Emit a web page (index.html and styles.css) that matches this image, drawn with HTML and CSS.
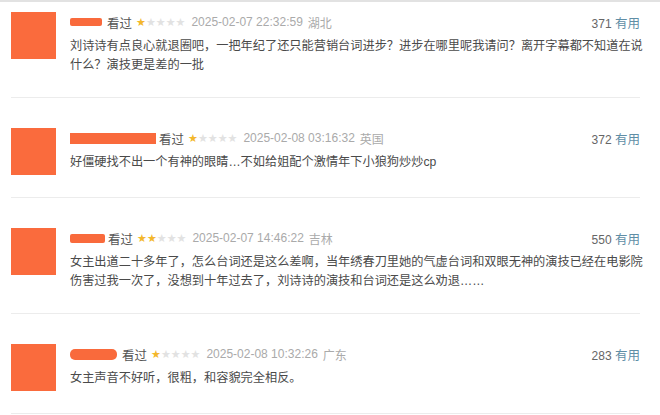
FILE: index.html
```html
<!DOCTYPE html>
<html lang="zh-CN">
<head>
  <meta charset="UTF-8">
  <meta name="viewport" content="width=device-width, initial-scale=1.0">
  <title>短评</title>
  <link rel="stylesheet" href="styles.css">
</head>
<body>
  <div class="comments">
    <!-- 第一条 -->
    <div class="comment">
      <div class="avatar"></div>
      <div class="body">
        <div class="meta">
          <span class="name name-1"></span>
          <span class="watched">看过</span>
          <span class="stars"><i class="on">★</i><i>★</i><i>★</i><i>★</i><i>★</i></span>
          <span class="time">2025-02-07 22:32:59</span>
          <span class="loc">湖北</span>
          <span class="votes"><span class="count">371</span> <a href="#">有用</a></span>
        </div>
        <p class="text">刘诗诗有点良心就退圈吧，一把年纪了还只能营销台词进步？进步在哪里呢我请问？离开字幕都不知道在说<br>什么？演技更是差的一批</p>
      </div>
    </div>
    <!-- 第二条 -->
    <div class="comment">
      <div class="avatar"></div>
      <div class="body">
        <div class="meta">
          <span class="name name-2"></span>
          <span class="watched">看过</span>
          <span class="stars"><i class="on">★</i><i>★</i><i>★</i><i>★</i><i>★</i></span>
          <span class="time">2025-02-08 03:16:32</span>
          <span class="loc">英国</span>
          <span class="votes"><span class="count">372</span> <a href="#">有用</a></span>
        </div>
        <p class="text">好僵硬找不出一个有神的眼睛…不如给姐配个激情年下小狼狗炒炒cp</p>
      </div>
    </div>
    <!-- 第三条 -->
    <div class="comment">
      <div class="avatar"></div>
      <div class="body">
        <div class="meta">
          <span class="name name-3"></span>
          <span class="watched">看过</span>
          <span class="stars"><i class="on">★</i><i class="on">★</i><i>★</i><i>★</i><i>★</i></span>
          <span class="time">2025-02-07 14:46:22</span>
          <span class="loc">吉林</span>
          <span class="votes"><span class="count">550</span> <a href="#">有用</a></span>
        </div>
        <p class="text">女主出道二十多年了，怎么台词还是这么差啊，当年绣春刀里她的气虚台词和双眼无神的演技已经在电影院<br>伤害过我一次了，没想到十年过去了，刘诗诗的演技和台词还是这么劝退……</p>
      </div>
    </div>
    <!-- 第四条 -->
    <div class="comment">
      <div class="avatar"></div>
      <div class="body">
        <div class="meta">
          <span class="name name-4"></span>
          <span class="watched">看过</span>
          <span class="stars"><i class="on">★</i><i>★</i><i>★</i><i>★</i><i>★</i></span>
          <span class="time">2025-02-08 10:32:26</span>
          <span class="loc">广东</span>
          <span class="votes"><span class="count">283</span> <a href="#">有用</a></span>
        </div>
        <p class="text">女主声音不好听，很粗，和容貌完全相反。</p>
      </div>
    </div>
  </div>
</body>
</html>
```

FILE: styles.css
```css
body {
  margin: 0;
  background: #fff;
  border-top: 2px solid #e2e2e2;
  font-family: "Liberation Sans", "Noto Sans CJK SC", sans-serif;
  color: #494949;
  overflow: hidden;
}
.comments {
  padding: 0 20px 0 11px;
}
.comment {
  display: flex;
  gap: 14px;
  padding: 30px 0 22px 0;
  border-bottom: 1px solid #ececec;
}
.comment:first-child {
  padding-top: 10px;
}
.avatar {
  flex: none;
  width: 45px;
  height: 47px;
  background: #fa6b3d;
}
.body {
  flex: 1;
  min-width: 0;
}
.meta {
  display: flex;
  align-items: center;
  height: 20px;
  font-size: 12px;
  white-space: nowrap;
}
.name {
  display: inline-block;
  height: 8px;
  background: #f96a3c;
  border-radius: 2px;
  margin-right: 5px;
}
.name-1 { width: 32px; }
.name-2 { width: 86px; height: 11px; border-radius: 0; margin-right: 3px; }
.name-3 { width: 35px; height: 9px; margin-right: 3px; }
.name-4 { width: 47px; height: 11px; border-radius: 5px; }
.watched {
  color: #555;
  font-size: 12.5px;
}
.stars {
  margin-left: 4px;
  font-family: "DejaVu Sans", sans-serif;
  font-size: 11px;
}
.stars i {
  font-style: normal;
  color: #e2e2e2;
}
.stars i.on {
  color: #f3b72c;
}
.time {
  margin-left: 6px;
  color: #aaa;
}
.loc {
  margin-left: 5px;
  color: #aaa;
}
.votes {
  margin-left: auto;
  color: #666;
}
.votes a {
  color: #5f8ea6;
  text-decoration: none;
  font-size: 12.5px;
}
.text {
  margin: 5px 0 0 0;
  font-size: 12.2px;
  line-height: 19px;
  color: #4a4a4a;
  white-space: nowrap;
}
```
